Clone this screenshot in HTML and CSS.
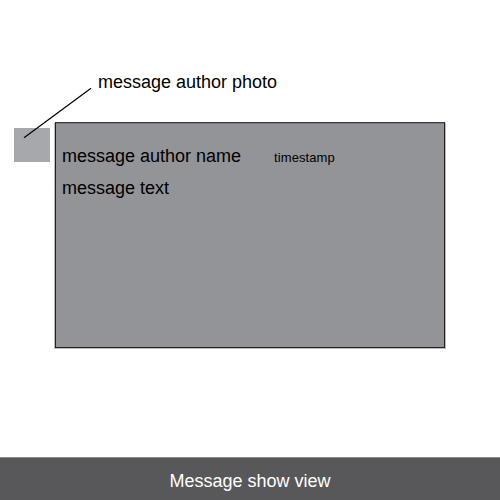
FILE: index.html
```html
<!DOCTYPE html>
<html lang="en">
<head>
<meta charset="utf-8">
<title>Message show view</title>
<link rel="stylesheet" href="styles.css">
</head>
<body>
<main class="view">
  <p class="photo-label">message author photo</p>
  <div class="message">
    <div class="photo"></div>
    <article class="card">
      <header class="card-head">
        <h2 class="author">message author name</h2>
        <time class="timestamp">timestamp</time>
      </header>
      <p class="text">message text</p>
    </article>
  </div>
  <svg class="pointer" width="70" height="54" viewBox="0 0 70 54"><path d="M1 52.8 68 3.2"/></svg>
</main>
<footer class="footer">Message show view</footer>
</body>
</html>
```
FILE: styles.css
```css
body {
  margin: 0;
  height: 500px;
  display: flex;
  flex-direction: column;
  background: #fff;
  color: #000;
  font-family: "Liberation Sans", Arial, sans-serif;
  font-size: 18px;
  line-height: 22px;
}
.view { position: relative; flex: 1; }
.photo-label { margin: 71px 0 0 98px; }
.message {
  display: flex;
  margin: 29px 0 0 14px;
}
.photo {
  width: 36px;
  height: 34px;
  margin: 6px 5px 0 0;
  background: #a7a8ab;
}
.card {
  box-sizing: border-box;
  width: 390px;
  height: 226px;
  padding: 22px 6px;
  border: 1px solid #231f20;
  border-top-color: #3c3a3b;
  background: #939497;
  box-shadow: 1px 1px 0 #bbb, -1px 1px 0 #bbb, inset 0 1px 0 #77787a;
}
.card-head { display: flex; align-items: baseline; }
.author { margin: 0; width: 212px; font-size: 18px; font-weight: normal; line-height: 22px; }
.timestamp { font-size: 13px; line-height: 16px; letter-spacing: 0.1px; }
.text { margin: 10px 0 0; }
.pointer {
  position: absolute;
  left: 23px;
  top: 85px;
  fill: none;
  stroke: #000;
  stroke-width: 1.2;
}
.footer {
  box-sizing: border-box;
  height: 43px;
  line-height: 46px;
  border-top: 1px solid #8a8b8c;
  background: #58585a;
  color: #fff;
  text-align: center;
}
```
